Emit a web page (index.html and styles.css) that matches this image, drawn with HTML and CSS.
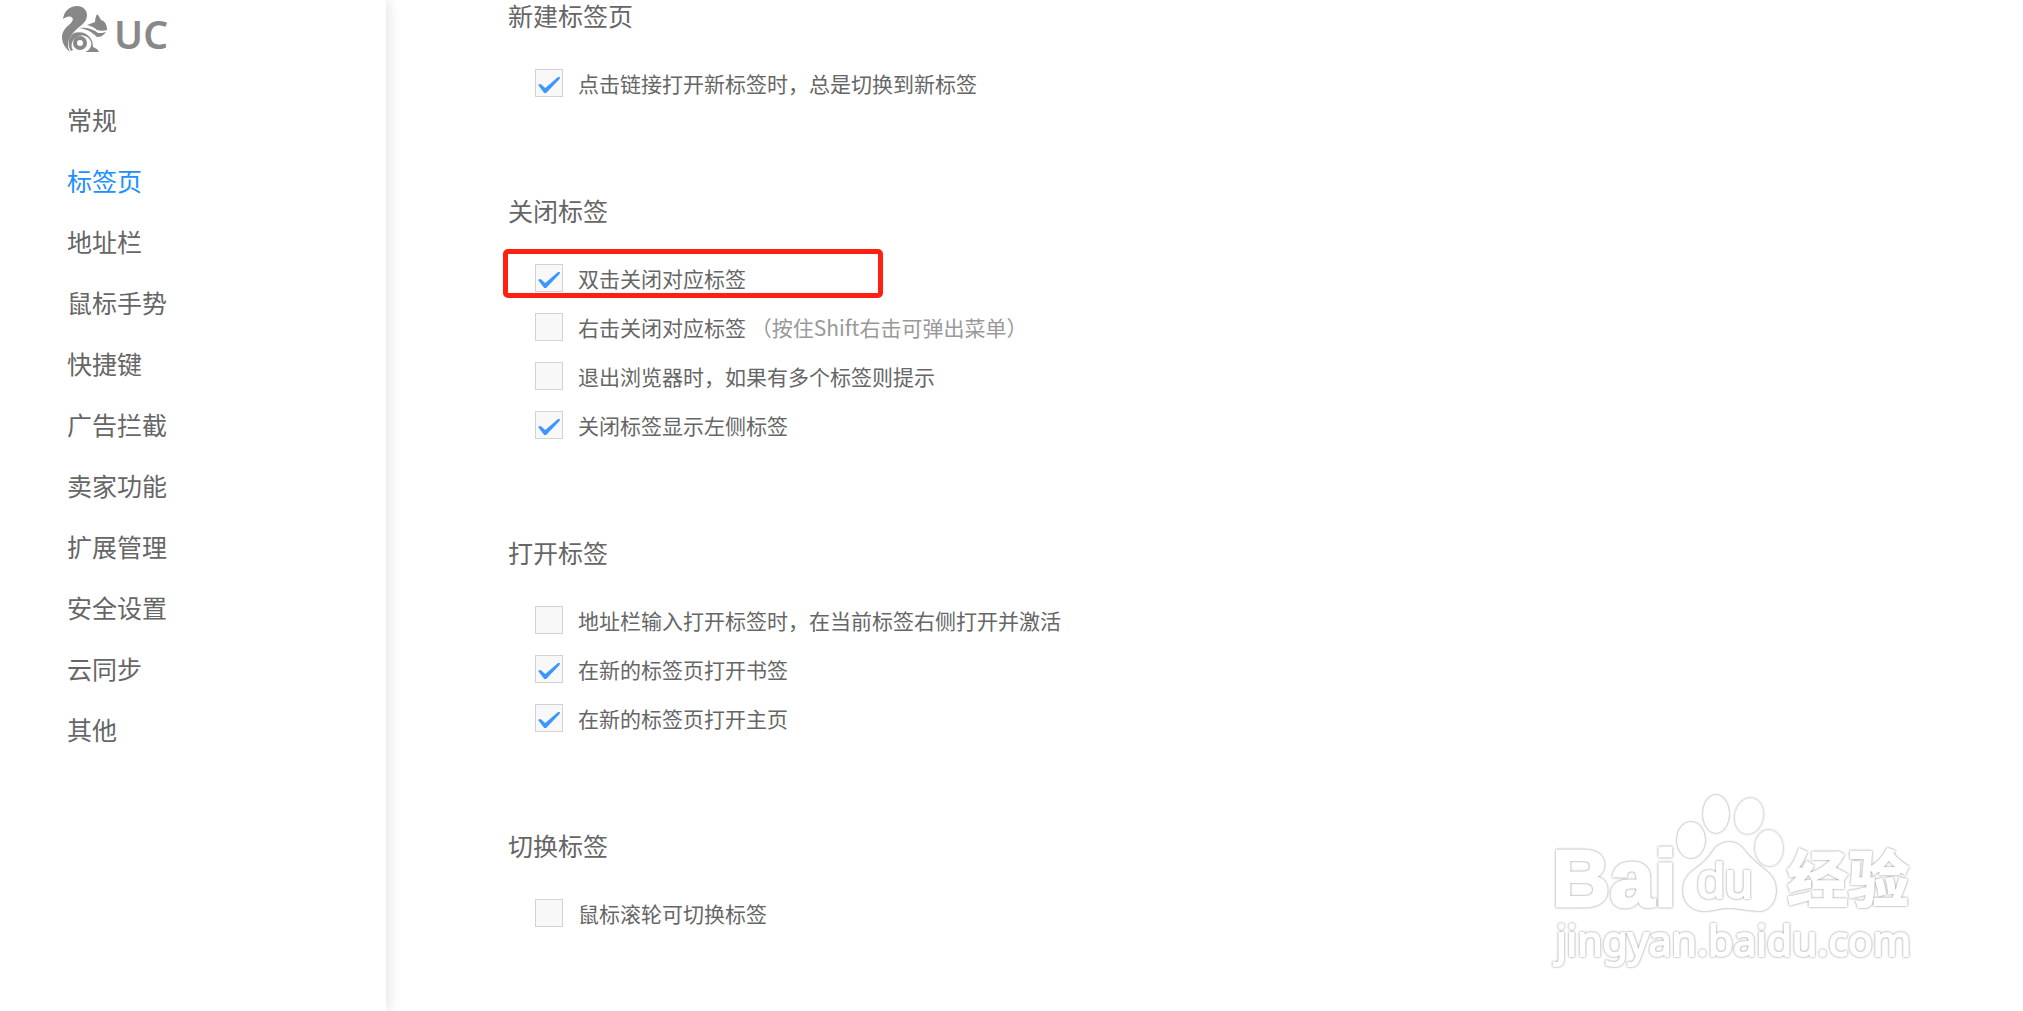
FILE: index.html
```html
<!DOCTYPE html>
<html lang="zh-CN">
<head>
  <meta charset="UTF-8">
  <title>设置 - 标签页</title>
  <link rel="stylesheet" href="styles.css">
</head>
<body>
  <aside class="sidebar">
    <div class="logo">
      <svg class="logo-icon" viewBox="0 0 46 46" aria-hidden="true">
        <!-- tail -->
        <path d="M8 46C3 42 0 37 0 31c0-5 3-9 8-13 3-3 4-6 1-7-2-1-5 0-8 2C2 5 8 0 15 0c6 0 10 4 10 9 0 6-4 9-9 13-6 5-10 11-10 17 0 3 1 5 2 7z"/>
        <!-- head and body -->
        <path d="M25 19c3-1 5-2 8-3 0-3 1-6 2-8 2 2 3 4 4 6 4 1 6 5 6 10-3 1-7 1-10 0-2-2-5-4-10-5z"/>
        <path d="M17 22c8-1 14 1 19 5 3 0 5 0 8-1-2 3-5 5-9 5-5-5-10-8-18-9z"/>
        <path d="M12 27c11-3 19 4 19 14 2 1 5 2 6 5H23c5-2 7-6 6-10-2-6-9-8-14-5-5 2-7 9-4 13l-2 1c-4-6-3-14 3-18z"/>
        <circle class="ring" cx="18" cy="37" r="5"/>
      </svg>
      <span class="logo-text">UC</span>
    </div>
    <nav class="menu">
      <a href="#">常规</a>
      <a href="#" class="active">标签页</a>
      <a href="#">地址栏</a>
      <a href="#">鼠标手势</a>
      <a href="#">快捷键</a>
      <a href="#">广告拦截</a>
      <a href="#">卖家功能</a>
      <a href="#">扩展管理</a>
      <a href="#">安全设置</a>
      <a href="#">云同步</a>
      <a href="#">其他</a>
    </nav>
  </aside>

  <main class="content">
    <section class="group">
      <h2>新建标签页</h2>
      <label class="option"><input type="checkbox" checked><span>点击链接打开新标签时，总是切换到新标签</span></label>
    </section>

    <section class="group">
      <h2>关闭标签</h2>
      <label class="option marked"><input type="checkbox" checked><span>双击关闭对应标签</span></label>
      <label class="option"><input type="checkbox"><span>右击关闭对应标签 <span class="hint">（按住Shift右击可弹出菜单）</span></span></label>
      <label class="option"><input type="checkbox"><span>退出浏览器时，如果有多个标签则提示</span></label>
      <label class="option"><input type="checkbox" checked><span>关闭标签显示左侧标签</span></label>
    </section>

    <section class="group">
      <h2>打开标签</h2>
      <label class="option"><input type="checkbox"><span>地址栏输入打开标签时，在当前标签右侧打开并激活</span></label>
      <label class="option"><input type="checkbox" checked><span>在新的标签页打开书签</span></label>
      <label class="option"><input type="checkbox" checked><span>在新的标签页打开主页</span></label>
    </section>

    <section class="group">
      <h2>切换标签</h2>
      <label class="option"><input type="checkbox"><span>鼠标滚轮可切换标签</span></label>
    </section>
  </main>

  <svg class="watermark" viewBox="0 0 380 190">
    <text class="wm-bai" x="7" y="116">Bai</text>
    <ellipse cx="146" cy="50" rx="13" ry="17"/>
    <ellipse cx="171" cy="24" rx="12" ry="18"/>
    <ellipse cx="204" cy="26" rx="13" ry="17" transform="rotate(12 204 26)"/>
    <ellipse cx="224" cy="58" rx="13" ry="17" transform="rotate(-4 224 58)"/>
    <path d="M184 53c-8 0-13 4-17 11-5 8-10 11-18 17-7 5-10 11-10 19 0 13 9 20 19 20s17-3 26-3 18 3 30 3c10 0 16-9 16-20 0-9-4-14-10-19-8-6-13-10-19-17-5-7-9-11-17-11z"/>
    <text class="wm-du" x="152" y="108">du</text>
    <text class="wm-cn" x="242" y="112">经验</text>
    <text class="wm-url" x="11" y="166">jingyan.baidu.com</text>
  </svg>
</body>
</html>
```
FILE: styles.css
```css
*,
*::before,
*::after {
  box-sizing: border-box;
}
body {
  margin: 0;
  display: flex;
  min-height: 100vh;
  position: relative;
  background: #fff;
  color: #666;
  font-family: "Noto Sans CJK SC", sans-serif;
  font-size: 21px;
}

/* sidebar */
.sidebar {
  width: 386px;
  flex-shrink: 0;
  padding: 6px 0 0 62px;
  box-shadow: 4px 0 12px rgba(0,0,0,0.09);
}
.logo {
  display: flex;
  align-items: center;
  gap: 6px;
  height: 46px;
  color: #888;
}
.logo-icon {
  width: 46px;
  height: 46px;
  fill: #888;
}
.logo-icon .ring {
  fill: none;
  stroke: #888;
  stroke-width: 4;
}
.logo-text {
  font-family: "Noto Sans", sans-serif;
  font-size: 39px;
  font-weight: 600;
  line-height: 40px;
  padding-top: 10px;
}
.menu {
  margin-top: 37px;
  padding-left: 5px;
}
.menu a {
  display: block;
  line-height: 61px;
  font-size: 25px;
  color: #666;
  text-decoration: none;
}
.menu a.active {
  color: #2090ff;
}

/* settings */
.content {
  flex: 1;
  padding-left: 122px;
}
.group {
  margin-bottom: 98px;
}
.group:last-child {
  margin-bottom: 0;
}
.group h2 {
  margin: 0;
  padding-bottom: 39px;
  font-size: 25px;
  font-weight: normal;
  line-height: 30px;
}
.option {
  display: flex;
  align-items: center;
  gap: 15px;
  position: relative;
  width: fit-content;
  height: 28px;
  margin: 0 0 21px 27px;
  line-height: 28px;
}
.option:last-child {
  margin-bottom: 0;
}
.option input {
  appearance: none;
  width: 28px;
  height: 28px;
  margin: 0;
  border: 1px solid #d0d3d6;
  background: #f8f8f8;
}
.option input:checked::before {
  content: "";
  display: block;
  width: 22px;
  height: 16px;
  margin: 7px 0 0 2px;
  background: #3b97ff;
  clip-path: polygon(0 48%, 12% 44%, 33% 68%, 91% 0, 100% 0, 98% 12%, 37% 100%, 28% 100%);
}
.hint {
  color: #999;
}

/* red frame around the option */
.marked::after {
  content: "";
  position: absolute;
  top: -15px;
  left: -32px;
  width: 380px;
  height: 49px;
  border: 5px solid #ff2012;
  border-radius: 5px;
}

/* watermark */
.watermark {
  position: absolute;
  right: 98px;
  bottom: 31px;
  width: 380px;
  height: 190px;
  overflow: visible;
  fill: #fff;
  stroke: #fff;
  stroke-width: 2;
  pointer-events: none;
}
.watermark > * {
  filter: drop-shadow(0 0 1px #888);
}
.watermark text {
  font-family: "Liberation Sans", sans-serif;
}
.watermark .wm-bai {
  font-size: 80px;
  font-weight: bold;
  stroke-width: 3;
}
.watermark .wm-du {
  font-size: 50px;
}
.watermark .wm-cn {
  font-family: "Noto Sans CJK SC", sans-serif;
  font-size: 61px;
  font-weight: bold;
}
.watermark .wm-url {
  font-family: "Noto Sans", sans-serif;
  font-size: 41px;
}
```
